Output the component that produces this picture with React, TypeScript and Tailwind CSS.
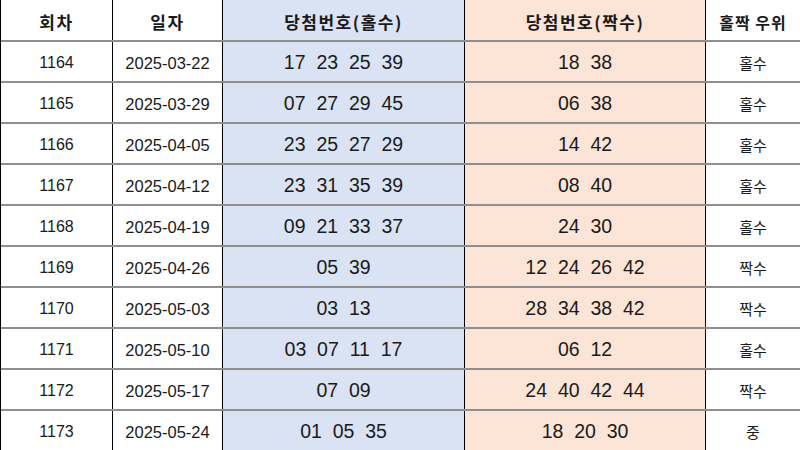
const rows: [string, string, string, string, string][] = [
  ["1164", "2025-03-22", "17  23  25  39", "18  38", "홀수"],
  ["1165", "2025-03-29", "07  27  29  45", "06  38", "홀수"],
  ["1166", "2025-04-05", "23  25  27  29", "14  42", "홀수"],
  ["1167", "2025-04-12", "23  31  35  39", "08  40", "홀수"],
  ["1168", "2025-04-19", "09  21  33  37", "24  30", "홀수"],
  ["1169", "2025-04-26", "05  39", "12  24  26  42", "짝수"],
  ["1170", "2025-05-03", "03  13", "28  34  38  42", "짝수"],
  ["1171", "2025-05-10", "03  07  11  17", "06  12", "홀수"],
  ["1172", "2025-05-17", "07  09", "24  40  42  44", "짝수"],
  ["1173", "2025-05-24", "01  05  35", "18  20  30", "중"],
];

const grid = "grid grid-cols-[111px_110px_242px_241px_1fr]";
const cell = "flex items-center justify-center pt-[3px]";

export default function App() {
  return (
    <div
      className="flex h-[450px] w-[800px] flex-col overflow-hidden border-l border-black bg-white text-[#1a1a1a]"
      style={{ fontFamily: '"Liberation Sans", "Noto Sans CJK KR", sans-serif' }}
    >
      <div className={`${grid} h-[42px] shrink-0 border-b-2 border-[#8f8f8f] text-[17px] font-bold tracking-[1.5px] [font-family:'Noto_Sans_CJK_KR',sans-serif]`}>
        <div className={cell}>회차</div>
        <div className={`${cell} border-l border-black`}>일자</div>
        <div className={`${cell} border-l border-black bg-[#dae3f3]`}>당첨번호(홀수)</div>
        <div className={`${cell} border-l border-black bg-[#fce4d6]`}>당첨번호(짝수)</div>
        <div className={`${cell} border-l border-black text-[16px] tracking-[1px]`}>홀짝 우위</div>
      </div>
      {rows.map((r, i) => (
        <div
          key={r[0]}
          className={`${grid} min-h-0 flex-1 ${i < rows.length - 1 ? "border-b-2 border-[#8f8f8f]" : ""}`}
        >
          <div className={`${cell} text-[16px]`}>{r[0]}</div>
          <div className={`${cell} border-l border-black text-[16.5px]`}>{r[1]}</div>
          <div className={`${cell} whitespace-pre border-l border-black bg-[#dae3f3] text-[19.5px]`}>{r[2]}</div>
          <div className={`${cell} whitespace-pre border-l border-black bg-[#fce4d6] text-[19.5px]`}>{r[3]}</div>
          <div className={`${cell} border-l border-black text-[15px] [font-family:'Noto_Sans_CJK_KR',sans-serif]`}>{r[4]}</div>
        </div>
      ))}
    </div>
  );
}
